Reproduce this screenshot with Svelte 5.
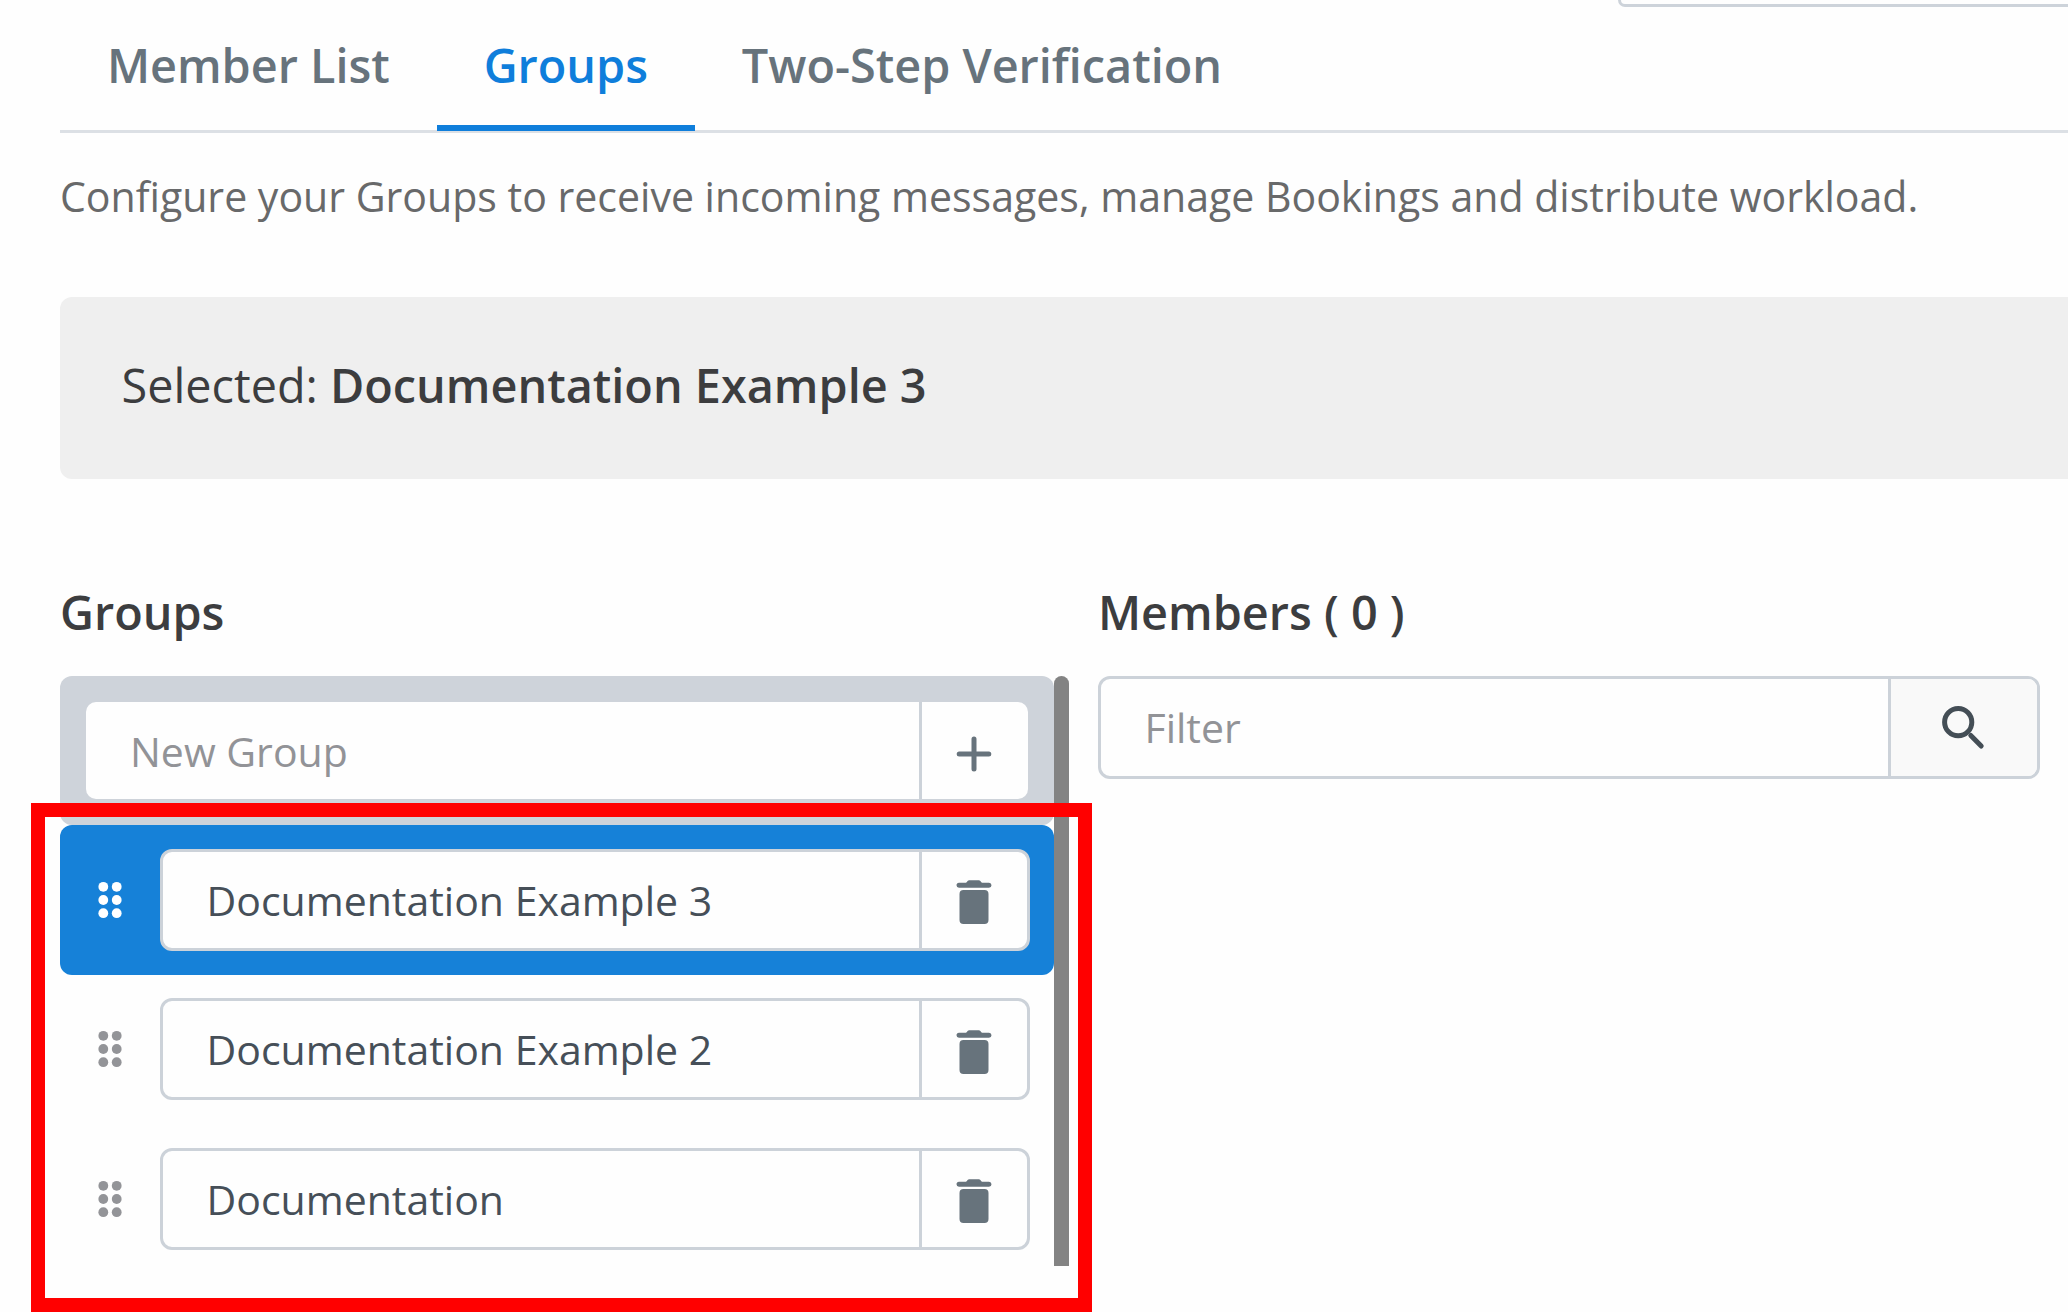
<script>
  const tabs = ['Member List', 'Groups', 'Two-Step Verification'];
  const groups = ['Documentation Example 3', 'Documentation Example 2', 'Documentation'];
  let activeTab = $state('Groups');
  let selected = $state('Documentation Example 3');
</script>

<main class="page">
  <div class="topbox"></div>

  <nav class="tabs">
    {#each tabs as tab}
      <button class="tab" class:active={tab === activeTab} onclick={() => (activeTab = tab)}>{tab}</button>
    {/each}
  </nav>

  <p class="intro">Configure your Groups to receive incoming messages, manage Bookings and distribute workload.</p>

  <section class="banner"><span>Selected: <b>{selected}</b></span></section>

  <div class="columns">
    <section class="groups">
      <h2>Groups</h2>
      <div class="scroller">
        <div class="list">
          <div class="new-row">
            <div class="field borderless">
              <span class="value placeholder">New Group</span>
              <span class="action">
                <svg width="48" height="48" viewBox="0 0 48 48">
                  <path d="M24 9v30M9.200 24h29.600" fill="none" stroke="#67737c" stroke-width="5" stroke-linecap="round" />
                </svg>
              </span>
            </div>
          </div>
          {#each groups as group}
            <div class="row" class:selected={group === selected}>
              <svg class="grip" width="26" height="38" viewBox="0 0 26 38">
                {#each [5.8, 19, 32.200] as y}
                  <circle cx="6.300" cy={y} r="4.900" />
                  <circle cx="19.700" cy={y} r="4.900" />
                {/each}
              </svg>
              <div class="field">
                <span class="value">{group}</span>
                <span class="action">
                  <svg width="48" height="48" viewBox="0 0 48 48">
                    <path
                      fill="#67737c"
                      d="M9 2.700H16C17 2.700 17.200 .2 19 .2H29C30.800 .2 31 2.700 32 2.700H39A2.500 2.500 0 0 1 39 7.700H9A2.500 2.500 0 0 1 9 2.700ZM13.500 10H34.500A4 4 0 0 1 38.500 14V40A4 4 0 0 1 34.500 44H13.500A4 4 0 0 1 9.500 40V14A4 4 0 0 1 13.500 10Z"
                    />
                  </svg>
                </span>
              </div>
            </div>
          {/each}
        </div>
        <div class="scrollbar"></div>
      </div>
    </section>

    <section class="members">
      <h2>Members ( 0 )</h2>
      <div class="field filter">
        <span class="value placeholder">Filter</span>
        <span class="action search">
          <svg width="48" height="48" viewBox="0 0 48 48">
            <g fill="none" stroke="#444e56" stroke-width="5">
              <circle cx="17.200" cy="19.200" r="13.600" />
              <path d="M29.800 32.500L40.200 43" stroke-linecap="round" />
            </g>
          </svg>
        </span>
      </div>
    </section>
  </div>

  <div class="highlight"></div>
</main>

<style>
  :global(body) {
    background: #fefefe;
    overflow: hidden;
  }
  .page {
    position: relative;
    box-sizing: border-box;
    width: 2068px;
    height: 1312px;
    padding-left: 60px;
    overflow: hidden;
    font-family: 'Open Sans', 'Noto Sans', sans-serif;
    color: #3c3d3f;
  }
  .topbox {
    box-sizing: border-box;
    height: 7px;
    margin-left: 1558px;
    border: 3px solid #cdd3da;
    border-width: 0 0 3px 3px;
    border-radius: 0 0 0 12px;
  }
  .tabs {
    display: flex;
    box-sizing: border-box;
    height: 126px;
    border-bottom: 3px solid #dce0e5;
  }
  .tab {
    box-sizing: border-box;
    height: 123.500px;
    padding: 0 46.900px 1px;
    border: 0;
    border-bottom: 6px solid transparent;
    background: none;
    font: 600 46.800px/60px 'Open Sans', 'Noto Sans', sans-serif;
    color: #67737c;
    white-space: nowrap;
  }
  .tab.active {
    border-color: #0f7edb;
    color: #0f7edb;
  }
  .intro {
    margin: 34px 0 0;
    font-size: 41.050px;
    line-height: 58px;
    white-space: nowrap;
    color: #68696a;
  }
  .banner {
    display: flex;
    align-items: center;
    box-sizing: border-box;
    height: 182px;
    margin-top: 72px;
    padding: 0 0 7px 61.500px;
    border-radius: 12px 0 0 12px;
    background: #efefef;
    font-size: 46.800px;
    white-space: pre;
  }
  .banner b {
    font-weight: 600;
  }
  .columns {
    display: flex;
    gap: 29px;
    margin-top: 103px;
  }
  h2 {
    margin: 0;
    height: 94px;
    font-size: 46.800px;
    font-weight: 600;
    line-height: 60px;
    white-space: nowrap;
  }
  .groups {
    width: 1009px;
  }
  .members {
    width: 942px;
  }
  .scroller {
    display: flex;
    height: 590px;
    overflow: hidden;
  }
  .list {
    width: 994px;
  }
  .scrollbar {
    width: 15px;
    border-radius: 8px 8px 0 0;
    background: #838383;
  }
  .new-row {
    box-sizing: border-box;
    height: 149.300px;
    padding: 26px 26.500px 0 26px;
    border-radius: 12px;
    background: #ced3da;
  }
  .row {
    display: flex;
    align-items: center;
    box-sizing: border-box;
    height: 149.300px;
    padding: 0 24px 0 37px;
    border-radius: 12px;
  }
  .row.selected {
    background: #1681d8;
  }
  .grip {
    flex: none;
    margin-right: 36.500px;
    fill: #939498;
  }
  .selected .grip {
    fill: #fff;
  }
  .field {
    display: flex;
    flex: 1;
    box-sizing: border-box;
    height: 102px;
    border: 3px solid #ccd2d9;
    border-radius: 12px;
    background: #fefefe;
    font-size: 41px;
    color: #464f58;
    overflow: hidden;
  }
  .filter {
    height: 102.500px;
  }
  .borderless {
    height: 97px;
    border: 0;
    border-radius: 10px;
  }
  .value {
    display: flex;
    flex: 1;
    align-items: center;
    padding: 0 0 0 44px;
    white-space: nowrap;
  }
  .filter .value {
    padding-left: 43.500px;
  }
  .placeholder {
    color: #929397;
  }
  .borderless .value {
    padding-top: 1px;
  }
  .action {
    display: flex;
    box-sizing: border-box;
    width: 108px;
    align-items: center;
    justify-content: center;
    border-left: 3px solid #ccd2d9;
  }
  .borderless .action {
    width: 109px;
  }
  .action svg {
    margin-left: -1px;
  }
  .borderless .action svg {
    margin-top: 6px;
  }
  .row .action svg {
    margin-top: 9px;
  }
  .field .action.search {
    width: 149px;
    padding-left: 3px;
    background: #f9f9f9;
  }
  .highlight {
    position: absolute;
    left: 31px;
    top: 803px;
    box-sizing: border-box;
    width: 1061px;
    height: 509px;
    border: 14px solid #f00;
  }
</style>
